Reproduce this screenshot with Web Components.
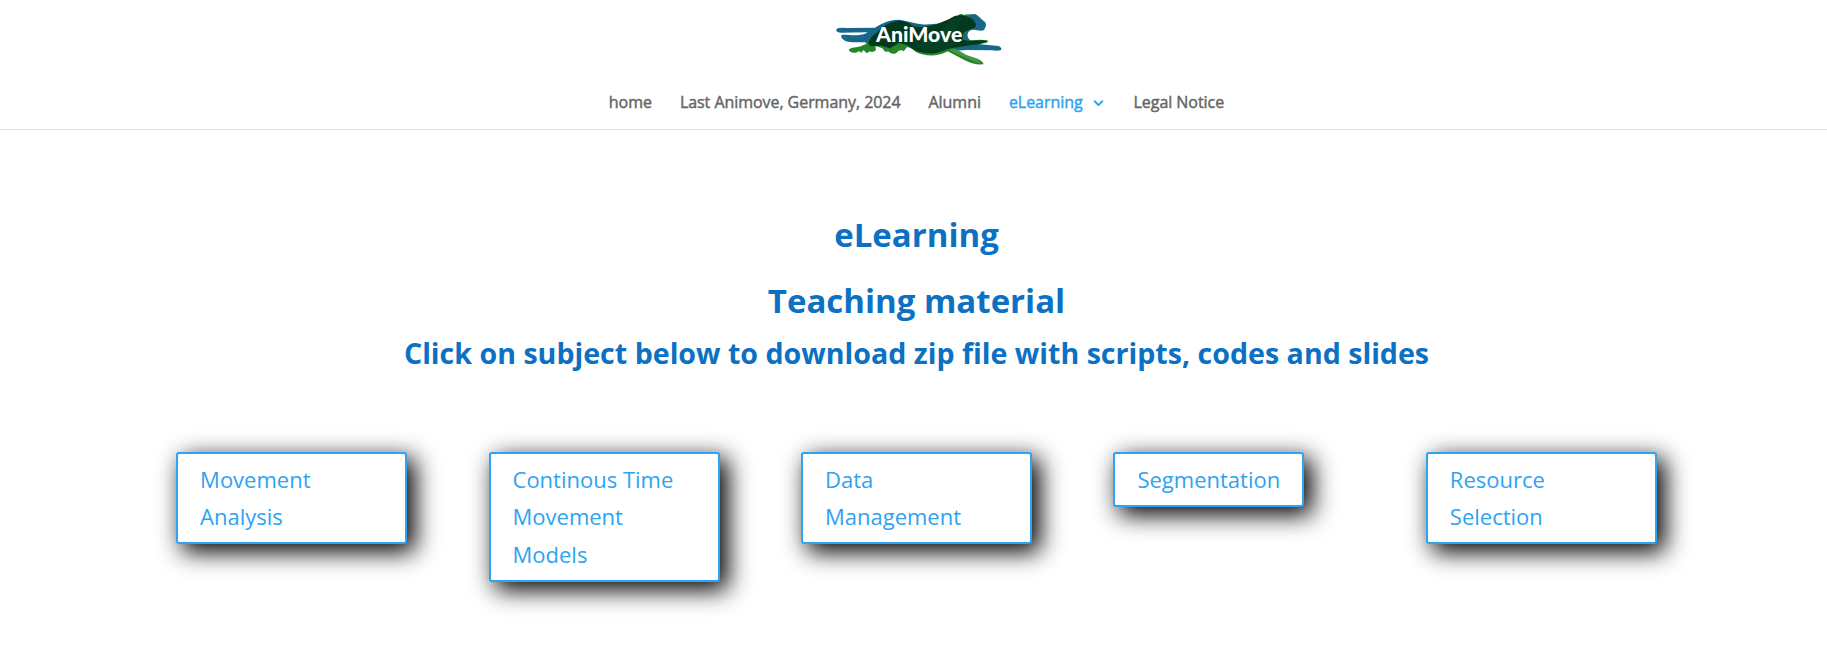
<!DOCTYPE html>
<html lang="en"><head><meta charset="utf-8"><title>eLearning – AniMove</title>
<style>body{margin:0;min-height:658px;background:#fff;font-family:"Open Sans",Arial,sans-serif;color:#666}</style></head>
<body>
<site-header>
<nav-item>home</nav-item><nav-item>Last Animove, Germany, 2024</nav-item><nav-item>Alumni</nav-item><nav-item active>eLearning</nav-item><nav-item>Legal Notice</nav-item>
</site-header>
<page-intro>
<span slot="title">eLearning</span><span slot="subtitle">Teaching material</span><span slot="hint">Click on subject below to download zip file with scripts, codes and slides</span>
</page-intro>
<subject-row>
<subject-button>Movement Analysis</subject-button><subject-button>Continous Time Movement Models</subject-button><subject-button>Data Management</subject-button><subject-button>Segmentation</subject-button><subject-button>Resource Selection</subject-button>
</subject-row>
<script>
const define=(name,html)=>customElements.define(name,class extends HTMLElement{
constructor(){super();this.attachShadow({mode:'open'}).innerHTML=html;}});
define('animove-logo',`<style>:host{display:block;width:200px;height:75px}svg{display:block}text{font:900 62px Lato,sans-serif;fill:#fff}</style>
<svg width="200" height="75" viewBox="0 0 600 225" role="img" aria-label="AniMove">
<g fill="#17678a">
<path d="M50 86Q58 82 80 84L165 83C185 70 208 58 238 59C270 64 300 76 330 73C360 72 375 65 390 58L435 44L464 42C476 46 480 55 494 65C502 73 496 84 491 91C475 95 463 84 449 92C435 104 445 122 466 131L536 138Q547 144 543 150Q535 154 515 151L440 150L360 155L285 148L230 132L155 140L135 127C118 125 100 130 78 124C66 117 59 108 67 104C94 104 124 111 143 97L62 98Q45 96 50 86Z"/>
</g>
<path fill="#25852b" d="M86 151C92 140 111 145 129 136C145 132 140 122 155 110L190 80L240 80L300 100L385 85L419 42L430 43L428 51L440 43L466 65L425 110L440 122L480 119L503 121Q507 129 492 130L435 138L403 144L439 165L474 177Q492 187 490 193C470 195 450 189 433 180L383 154C350 172 312 168 289 157L264 138L251 154Q245 148 236 152C228 164 214 164 204 154Q196 160 187 145L166 137L168 150Q158 160 149 154Q139 165 134 153L129 151L124 159Q118 151 113 156Q96 163 86 151Z"/>
<path fill="#04381f" d="M144 128C151 114 158 104 170 98C187 79 209 66 231 63C247 60 263 64 276 76C292 84 322 81 350 73L386 58L404 48C420 43 443 47 458 58C466 67 472 75 464 83C455 87 442 88 431 99L427 118L443 122L490 121L502 124L480 132L441 137L394 145C367 151 353 163 325 160C300 160 277 149 263 136L236 129L210 145L184 137L151 139Z"/>
<path fill="#07522d" opacity=".35" d="M306 112L367 86L398 59L426 54L407 92L421 125L371 151L320 156L286 140Z"/>
<path fill="#5ba35e" opacity=".6" d="M388 150L407 147L439 166L474 178L481 190L454 181L426 168Z"/>
<text x="168" y="125" textLength="259" lengthAdjust="spacingAndGlyphs">AniMove</text></svg>`);
define('site-header',`<style>:host{display:block;box-sizing:border-box;height:130px;border-bottom:1px solid #e2e2e2}
animove-logo{margin:0 0 0 820px}nav{display:flex;justify-content:center;gap:28px;padding:15px 0 0 6px}</style>
<header><animove-logo></animove-logo><nav><slot></slot></nav></header>`);
define('nav-item',`<style>:host{display:flex;align-items:center;font-size:16px;line-height:24px;font-weight:500;letter-spacing:-.05px;-webkit-text-stroke:.45px currentColor;white-space:nowrap;color:#666}
:host([active]){color:#2ea3f2}svg{display:none;margin:1px 2px 0 10px}:host([active]) svg{display:block}</style><slot></slot>
<svg width="11" height="8" viewBox="0 0 11 8" fill="none" stroke="currentColor" stroke-width="2" stroke-linecap="round" stroke-linejoin="round"><path d="M1.7 2.3L5.5 6.1L9.3 2.3"/></svg>`);
define('page-intro',`<style>:host{display:block;text-align:center;color:#0c71c3;padding:89px 0 0 6px}
h1,h2,h3{margin:0;font-weight:700;line-height:32px}h1,h2{font-size:33px}h1{margin-bottom:34px}h2{margin-bottom:22px}h3{font-size:28.6px;line-height:28px}</style>
<h1><slot name="title"></slot></h1><h2><slot name="subtitle"></slot></h2><h3><slot name="hint"></slot></h3>`);
define('subject-row',`<style>:host{display:grid;grid-template-columns:repeat(5,231px);column-gap:81.45px;align-items:start;justify-items:start;padding:85.3px 0 0 176.1px}</style><slot></slot>`);
define('subject-button',`<style>:host{display:block;box-sizing:border-box;max-width:231px;padding:6.6px 22px;border:2px solid #2ea3f2;border-radius:3px;background:#fff;color:#2ea3f2;font-size:22px;line-height:37.4px;box-shadow:7px 7px 24px 1px #000}</style><slot></slot>`);
</script></body></html>
